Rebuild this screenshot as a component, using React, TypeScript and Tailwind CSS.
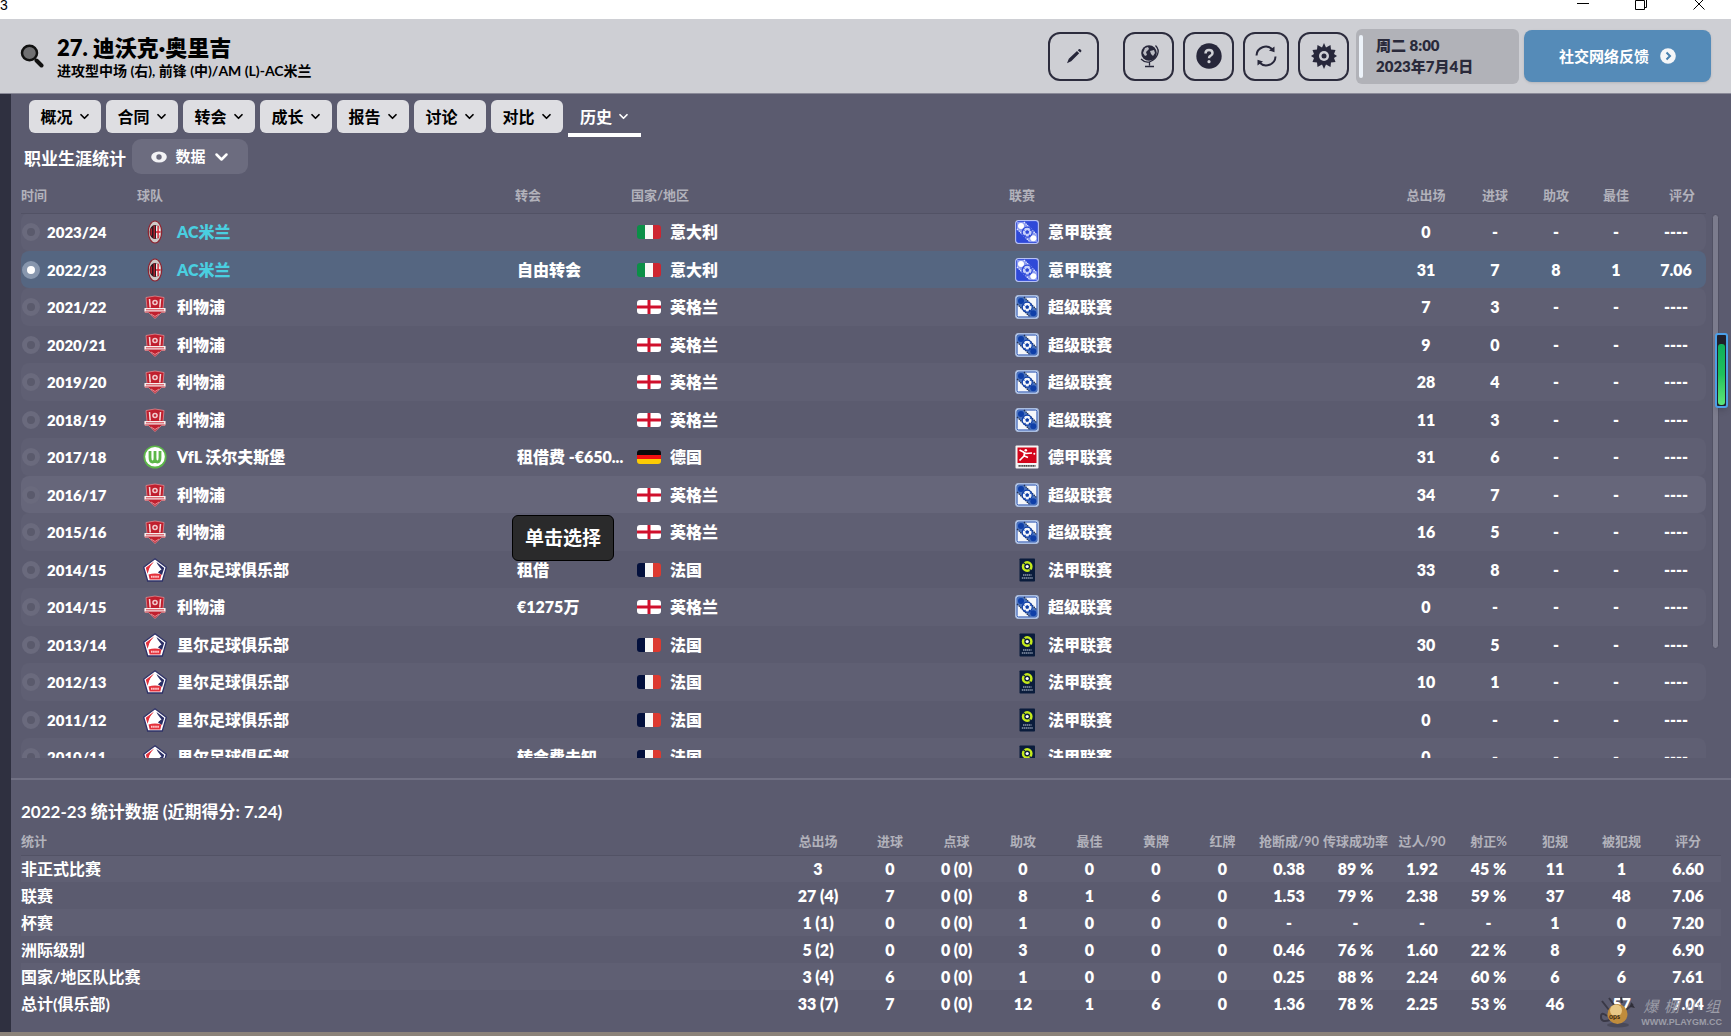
import { useState } from 'react';
import type { ReactNode } from 'react';

type Club = 'milan' | 'liverpool' | 'wolfsburg' | 'lille';

type Season = {
  year: string;
  club: Club;
  fee?: string;
  stats: string[];
};

const clubs: Record<Club, { name: string; country: string; league: string }> = {
  milan: { name: 'AC米兰', country: '意大利', league: '意甲联赛' },
  liverpool: { name: '利物浦', country: '英格兰', league: '超级联赛' },
  wolfsburg: { name: 'VfL 沃尔夫斯堡', country: '德国', league: '德甲联赛' },
  lille: { name: '里尔足球俱乐部', country: '法国', league: '法甲联赛' },
};

const seasons: Season[] = [
  { year: '2023/24', club: 'milan', stats: ['0', '-', '-', '-', '----'] },
  { year: '2022/23', club: 'milan', fee: '自由转会', stats: ['31', '7', '8', '1', '7.06'] },
  { year: '2021/22', club: 'liverpool', stats: ['7', '3', '-', '-', '----'] },
  { year: '2020/21', club: 'liverpool', stats: ['9', '0', '-', '-', '----'] },
  { year: '2019/20', club: 'liverpool', stats: ['28', '4', '-', '-', '----'] },
  { year: '2018/19', club: 'liverpool', stats: ['11', '3', '-', '-', '----'] },
  { year: '2017/18', club: 'wolfsburg', fee: '租借费 -€650...', stats: ['31', '6', '-', '-', '----'] },
  { year: '2016/17', club: 'liverpool', stats: ['34', '7', '-', '-', '----'] },
  { year: '2015/16', club: 'liverpool', stats: ['16', '5', '-', '-', '----'] },
  { year: '2014/15', club: 'lille', fee: '租借', stats: ['33', '8', '-', '-', '----'] },
  { year: '2014/15', club: 'liverpool', fee: '€1275万', stats: ['0', '-', '-', '-', '----'] },
  { year: '2013/14', club: 'lille', stats: ['30', '5', '-', '-', '----'] },
  { year: '2012/13', club: 'lille', stats: ['10', '1', '-', '-', '----'] },
  { year: '2011/12', club: 'lille', stats: ['0', '-', '-', '-', '----'] },
  { year: '2010/11', club: 'lille', fee: '转会费未知', stats: ['0', '-', '-', '-', '----'] },
];

const breakdownHeads = ['进球', '点球', '助攻', '最佳', '黄牌', '红牌', '抢断成/90', '传球成功率', '过人/90', '射正%', '犯规', '被犯规', '评分'];

const breakdown = [
  ['非正式比赛', '3', '0', '0 (0)', '0', '0', '0', '0', '0.38', '89 %', '1.92', '45 %', '11', '1', '6.60'],
  ['联赛', '27 (4)', '7', '0 (0)', '8', '1', '6', '0', '1.53', '79 %', '2.38', '59 %', '37', '48', '7.06'],
  ['杯赛', '1 (1)', '0', '0 (0)', '1', '0', '0', '0', '-', '-', '-', '-', '1', '0', '7.20'],
  ['洲际级别', '5 (2)', '0', '0 (0)', '3', '0', '0', '0', '0.46', '76 %', '1.60', '22 %', '8', '9', '6.90'],
  ['国家/地区队比赛', '3 (4)', '6', '0 (0)', '1', '0', '0', '0', '0.25', '88 %', '2.24', '60 %', '6', '6', '7.61'],
  ['总计(俱乐部)', '33 (7)', '7', '0 (0)', '12', '1', '6', '0', '1.36', '78 %', '2.25', '53 %', '46', '57', '7.04'],
];

const tabs = ['概况', '合同', '转会', '成长', '报告', '讨论', '对比'];

function Chevron({ className }: { className: string }) {
  return (
    <svg viewBox="0 0 12 8" className={className} fill="none" stroke="currentColor" strokeWidth="2" strokeLinecap="round" strokeLinejoin="round" aria-hidden="true">
      <path d="M2 2l4 4 4-4" />
    </svg>
  );
}

function ClubBadge({ club }: { club: Club }) {
  if (club === 'milan') {
    return (
      <svg viewBox="0 0 24 24" className="size-6">
        <ellipse cx="12" cy="12" rx="6.700" ry="11" fill="#cfcac8" stroke="#8e2430" strokeWidth="1.200" />
        <ellipse cx="12" cy="12" rx="5.400" ry="7" fill="#2a1a20" />
        <path d="M7.500 8.500H9v7H7.500zM10.500 5.500h1.500v13h-1.500z" fill="#b01f2c" />
        <path d="M13 5.300c3 1 4.600 3.500 4.600 6.700s-1.600 5.700-4.600 6.700z" fill="#efeaea" />
        <path d="M14.400 5.800h1.400v12.400h-1.400zM13 11.200h4.600v1.600H13z" fill="#d4202f" />
      </svg>
    );
  }
  if (club === 'liverpool') {
    return (
      <svg viewBox="0 0 24 24" className="size-6">
        <path d="M3 2.500Q12-.5 21 2.500l-1 11h2v4h-3.500L12 23.500 5.500 17.500H2v-4h2z" fill="#c01f2e" stroke="#dc8a90" strokeWidth=".8" />
        <path d="M6.500 4l.7 8.500M17.500 4l-.7 8.500" stroke="#f4dcdc" strokeWidth="1.500" />
        <circle cx="12" cy="7.500" r="2.800" fill="#f0c9cb" />
        <circle cx="12" cy="7.500" r="1.200" fill="#c01f2e" />
        <path d="M1.500 13h21v3.500h-21z" fill="#f7eeee" />
        <path d="M3 14.300h18v1H3z" fill="#cf3643" />
        <path d="M8 19l4 2.500 4-2.500" stroke="#e58c93" fill="none" />
      </svg>
    );
  }
  if (club === 'wolfsburg') {
    return (
      <svg viewBox="0 0 24 24" className="size-6">
        <circle cx="12" cy="12" r="11.500" fill="#5cb748" />
        <circle cx="12" cy="11.700" r="9.800" fill="#fff" />
        <path d="M7 6v6.500q0 4.500 2.600 4.500 2.400 0 2.400-4V6v7q0 4 2.400 4 2.600 0 2.600-4.500V6" fill="none" stroke="#5cb748" strokeWidth="2.800" />
      </svg>
    );
  }
  return (
    <svg viewBox="0 0 24 24" className="size-6">
      <path d="M12 .8L23.300 9.300 19.300 23H4.700L.7 9.300z" fill="#fff" stroke="#2f3268" strokeWidth="1.300" />
      <path d="M11 3.500L2.800 9.700l1.700 6L6.500 10z" fill="#e3313c" />
      <path d="M13.500 4l7.700 5.900-2.200 7.100-4-2.500 2-2.500z" fill="#2b2f66" />
      <path d="M6.500 16c-1-6 2-11 5.500-11l3 2 3.500 4.500-2.500 1.500-3-1 1 4z" fill="#fff" />
      <path d="M5.500 16.500q6.500-2 13 0l-1.200 5H6.700z" fill="#e3313c" />
      <path d="M8 18.700h8" stroke="#ffc9cb" strokeWidth="2" strokeDasharray="1.600 .5" />
    </svg>
  );
}

function Flag({ club }: { club: Club }) {
  if (club === 'liverpool') {
    return (
      <span className="flex h-[14px] w-6 shrink-0 overflow-hidden rounded-[3px] bg-white">
        <svg viewBox="0 0 24 14" className="h-full w-full">
          <path d="M12 0v14M0 7h24" stroke="#d0102c" strokeWidth="3" />
        </svg>
      </span>
    );
  }
  if (club === 'wolfsburg') {
    return (
      <span className="flex h-[14px] w-6 shrink-0 flex-col overflow-hidden rounded-[3px]">
        <span className="flex-1 bg-[#0a0a0a]" />
        <span className="flex-1 bg-[#f01010]" />
        <span className="flex-1 bg-[#fccb05]" />
      </span>
    );
  }
  const italy = club === 'milan';
  return (
    <span className="flex h-[14px] w-6 shrink-0 overflow-hidden rounded-[3px]">
      <span className={italy ? 'flex-1 bg-[#0b8f47]' : 'flex-1 bg-[#03103c]'} />
      <span className="flex-1 bg-[#f8f8f5]" />
      <span className={italy ? 'flex-1 bg-[#cd2530]' : 'flex-1 bg-[#dc3a30]'} />
    </span>
  );
}

function LeagueBadge({ club }: { club: Club }) {
  if (club === 'wolfsburg') {
    return (
      <svg viewBox="0 0 24 24" className="size-6">
        <rect x=".5" y=".5" width="23" height="23" rx="1" fill="#f4f4f4" />
        <rect x="2.500" y="2.500" width="19" height="15.500" fill="#d3051b" />
        <path d="M4.500 5l4 2M8 7l3 1.500 6-.5M9.500 8L9 11l-4.500 4.500M9.500 11l3.500 1.500" stroke="#fff" strokeWidth="1.700" fill="none" strokeLinejoin="round" />
        <circle cx="10.800" cy="5.200" r="1.300" fill="#fff" />
        <circle cx="19.300" cy="8.800" r="1" fill="#fff" />
        <path d="M3.500 20.800h17" stroke="#444" strokeWidth="1.700" strokeDasharray="1.400 .4" />
      </svg>
    );
  }
  if (club === 'lille') {
    return (
      <svg viewBox="0 0 24 24" className="size-6">
        <rect x="4.500" y=".5" width="15.500" height="23" rx=".8" fill="#0a1c3c" />
        <circle cx="12.200" cy="8.500" r="4.200" fill="none" stroke="#c5ea1c" strokeWidth="2.500" />
        <circle cx="12.200" cy="8.500" r="1.600" fill="#fff" />
        <path d="M8 4.500l2 1.500M14.500 11.500l2 1.500" stroke="#0a1c3c" strokeWidth="1.200" />
        <path d="M8 17h8.500M6.800 20h11" stroke="#8b96aa" strokeWidth="1.400" strokeDasharray="1.400 .5" />
      </svg>
    );
  }
  const serieA = club === 'milan';
  const ink = serieA ? '#2f49d8' : '#0f3fa8';
  const light = serieA ? '#c9d2fb' : '#f5f7fb';
  return (
    <svg viewBox="0 0 24 24" className="size-6">
      <rect x=".7" y=".7" width="22.600" height="22.600" rx="2.500" fill={serieA ? ink : light} stroke={serieA ? '#b5c0f5' : '#a9bde0'} strokeWidth="1.300" />
      <rect x="2" y="2" width="20" height="20" rx="1.500" fill="none" stroke={ink} strokeWidth="1" />
      <path d="M2 2h7l13 13v7h-7L2 9z" fill={serieA ? '#8b9bf0' : '#4a72bd'} />
      <path d="M9 2l13 13M2 9l13 13" stroke={serieA ? '#e2e7ff' : '#26344f'} strokeWidth="1.200" strokeDasharray="1.500 .8" />
      <circle cx="6" cy="6" r="3" fill={serieA ? '#fff' : ink} />
      <circle cx="18.300" cy="18.300" r="3" fill={serieA ? '#fff' : ink} />
      <circle cx="12.200" cy="12.200" r="5" fill={light} stroke={ink} strokeWidth="1.200" />
      <path d="M12.200 10l2 1.500-.8 2.300H11l-.8-2.300z" fill={ink} />
      <path d="M8 9.500l1.500 1M16.400 9.500l-1.500 1M9.500 16l1-1M15 16l-1-1" stroke={ink} strokeWidth="1.300" />
    </svg>
  );
}

function ToolButton({ label, children, className = 'w-[51px]' }: { label: string; children: ReactNode; className?: string }) {
  return (
    <button type="button" aria-label={label} className={`flex h-[49px] items-center justify-center rounded-[12px] border-2 border-[#2c2c3d] text-[#27273a] ${className}`}>
      {children}
    </button>
  );
}

function WindowBar() {
  return (
    <div className="flex h-[19px] shrink-0 justify-between overflow-hidden bg-white text-black">
      <span className="font-['Liberation_Sans'] text-[14px] leading-[10px]">3</span>
      <div className="flex gap-[46px] pr-[26px]">
        <button type="button" aria-label="最小化" className="h-3 w-3">
          <svg viewBox="0 0 12 12" className="size-3" stroke="currentColor"><path d="M0 3.500h12" /></svg>
        </button>
        <button type="button" aria-label="还原" className="h-3 w-3">
          <svg viewBox="0 0 12 12" className="size-3" fill="none" stroke="currentColor"><path d="M.5.500h9v9h-9zM11.500 0v7.500h-2" /></svg>
        </button>
        <button type="button" aria-label="关闭" className="h-3 w-3">
          <svg viewBox="0 0 12 12" className="size-3" stroke="currentColor"><path d="M.5-1.500l11 11M11.500-1.500l-11 11" /></svg>
        </button>
      </div>
    </div>
  );
}

function Header() {
  return (
    <header className="flex h-[75px] shrink-0 items-center border-b border-[#8a8a98] bg-[#cecfd4] pr-5 pl-5">
      <button type="button" aria-label="搜索" className="mr-[13px]">
        <svg viewBox="0 0 24 24" className="size-6">
          <ellipse cx="9.500" cy="9" rx="7.500" ry="7.300" fill="#707072" stroke="#111" strokeWidth="2.500" />
          <path d="M16.500 16.500l5 5" stroke="#111" strokeWidth="4" strokeLinecap="round" />
        </svg>
      </button>
      <div className="flex-1 pt-1 text-black">
        <h1 className="text-[22px] leading-[26px] font-extrabold">27. 迪沃克·奥里吉</h1>
        <p className="text-[14px] leading-[20px] font-bold">进攻型中场 (右), 前锋 (中)/AM (L)-AC米兰</p>
      </div>
      <div className="flex items-center">
        <ToolButton label="编辑">
          <svg viewBox="0 0 18 18" className="size-[18px]" fill="currentColor">
            <path d="M12 4l2.200 2.200-8 8L2 16.200l1.800-4.400zM12.800 3.200l1-1q.7-.6 1.400 0l1 1q.6.700 0 1.400l-1 1z" />
          </svg>
        </ToolButton>
        <div className="ml-6 flex gap-[9px]">
          <ToolButton label="世界">
            <svg viewBox="0 0 24 26" className="h-[26px] w-6">
              <circle cx="12" cy="10" r="7.800" fill="currentColor" />
              <path d="M8 5l3-1 1 2-3 3 1 3-2 1-2-3zM13 8l4-1 1 3-2 3-2-2z" fill="#b9bac2" />
              <path d="M18.500 2.500q4 4 2 9t-7 7-9.500-2.500M12.500 19v3.500M8 23.500h9" fill="none" stroke="currentColor" strokeWidth="1.300" />
            </svg>
          </ToolButton>
          <ToolButton label="帮助">
            <svg viewBox="0 0 26 26" className="size-[26px]">
              <circle cx="13" cy="13" r="12.700" fill="currentColor" />
              <path d="M9.500 10.500q0-3.500 3.500-3.500t3.500 3q0 1.800-1.800 2.700-1.700.8-1.700 2.600" fill="none" stroke="#cecfd4" strokeWidth="2.500" />
              <circle cx="13" cy="18.700" r="1.600" fill="#cecfd4" />
            </svg>
          </ToolButton>
          <ToolButton label="刷新" className="w-[46px]">
            <svg viewBox="0 0 22 22" className="size-[22px]" fill="none" stroke="currentColor" strokeWidth="2">
              <path d="M1.500 10.500A9.300 9.300 0 0 1 17.500 4.500M20.500 11.500A9.300 9.300 0 0 1 4.500 17.500" />
              <path d="M14 5.500l5.500 1.800V1.500zM8 16.500l-5.500-1.800v5.800z" fill="currentColor" stroke="none" />
            </svg>
          </ToolButton>
          <ToolButton label="设置">
            <svg viewBox="0 0 26 26" className="size-[26px]" fill="currentColor">
              <path d="M13 0l2 4.500L19.500 2 20 6.500 24.500 7l-1.500 4L26 13l-3 2 1.500 4-4.500.5-.5 4.500-4.500-2.500L13 26l-2-4.500L6.500 24 6 19.500 1.500 19 3 15l-3-2 3-2-1.500-4L6 6.500 6.500 2 11 4.500z" />
              <circle cx="13" cy="13" r="5" fill="#cecfd4" />
              <circle cx="13" cy="13" r="2.500" />
            </svg>
          </ToolButton>
        </div>
        <div className="ml-[7px] flex h-[55px] w-[163px] items-center rounded-[6px] bg-[#b1b2b8] pl-[3px]">
          <span className="h-[43px] w-1 rounded-full bg-[#edf3fa]" />
          <p className="ml-[13px] text-[15px] leading-[21px] font-extrabold text-[#2a2a3b]">
            周二 8:00
            <br />
            2023年7月4日
          </p>
        </div>
        <button type="button" className="ml-[5px] flex h-[52px] w-[187px] items-center justify-center gap-[11px] rounded-[8px] bg-[#558bb8] text-[15px] font-bold text-white shadow">
          社交网络反馈
          <svg viewBox="0 0 16 16" className="size-4">
            <circle cx="8" cy="8" r="7.800" fill="#f4f6f8" />
            <path d="M6.500 4.500L10 8l-3.500 3.500" fill="none" stroke="#4680ae" strokeWidth="2" />
          </svg>
        </button>
      </div>
    </header>
  );
}

function Watermark() {
  return (
    <div className="absolute right-[9px] bottom-2 flex items-end gap-[5px] text-[#9c9da8]">
      <svg viewBox="0 0 36 32" className="h-8 w-9">
        <ellipse cx="18" cy="29" rx="11" ry="2.500" fill="#3e3d4b" opacity=".6" />
        <path d="M9 14L2 5M14 9L9 2M22 7L21 1M7 20q-6-5-6 1t9 3M26 14l7-6" stroke="#3a3947" strokeWidth="2" fill="none" />
        <path d="M31 6l4 6-5-1z" fill="#2f2e38" />
        <circle cx="17.500" cy="18" r="10" fill="#c08c3c" />
        <circle cx="16" cy="14.500" r="6" fill="#e8c886" />
        <text x="9" y="23" fontSize="7" fontWeight="bold" fill="#3c2c14">ops</text>
      </svg>
      <div>
        <div className="flex justify-between px-[2px] font-['Liberation_Serif','Noto_Sans_CJK_SC',serif] text-[15px] leading-[18px] italic">
          <span>爆</span><span>棚</span><span>小</span><span>组</span>
        </div>
        <div className="font-['Liberation_Sans'] text-[9px] leading-[12px] font-bold whitespace-nowrap">WWW.PLAYGM.CC</div>
      </div>
    </div>
  );
}

export default function App() {
  const [selected, setSelected] = useState(1);

  return (
    <div className="relative flex h-screen flex-col overflow-hidden bg-[#8b8279] font-['Lato','Noto_Sans_CJK_SC',sans-serif] text-white">
      <WindowBar />
      <Header />

      <div className="flex min-h-0 flex-1 bg-[#2f3040] pl-[11px]">
        <main className="flex min-w-0 flex-1 flex-col bg-[#5b5b6f]">
          <nav className="flex h-[45px] shrink-0 gap-[5px] pt-[6px] pl-[18px]">
            {tabs.map((tab) => (
              <button key={tab} type="button" className="flex h-[33px] w-[72px] items-center justify-center gap-[6px] rounded-[6px] bg-[#dedee2] text-[16px] font-bold text-black">
                {tab}
                <Chevron className="h-[7px] w-[11px]" />
              </button>
            ))}
            <button type="button" className="flex h-[37px] w-[73px] items-center justify-center gap-[6px] border-b-4 border-white text-[16px] font-bold">
              历史
              <Chevron className="h-[7px] w-[11px]" />
            </button>
          </nav>

          <section className="flex min-h-0 flex-1 flex-col border-b-2 border-[#717184] pb-5">
            <div className="flex h-[35px] shrink-0 items-end gap-[6px] pl-[13px]">
              <h2 className="text-[17px] leading-[30px] font-bold">职业生涯统计</h2>
              <button type="button" className="flex h-[35px] w-[116px] items-center justify-center gap-[8px] rounded-[9px] bg-[#6c6c7f] text-[15px] font-bold">
                <svg viewBox="0 0 16 12" className="h-3 w-4">
                  <ellipse cx="8" cy="6" rx="7.800" ry="5.500" fill="#f3f3f6" />
                  <circle cx="8" cy="6" r="2.700" fill="#6c6c7f" />
                </svg>
                数据
                <Chevron className="h-[10px] w-[15px]" />
              </button>
            </div>

            <div className="flex min-h-0 flex-1 overflow-hidden pr-[12px] pl-[10px]">
              <div className="min-w-0 flex-1">
                <table className="w-full table-fixed text-[16px] leading-[24px] font-extrabold">
                  <thead className="text-left text-[13px] text-[#b2b2bb]">
                    <tr className="h-[39px] border-b border-[#525265]">
                      <th className="w-[116px] pt-1">时间</th>
                      <th className="w-[378px] pt-1">球队</th>
                      <th className="w-[116px] pt-1">转会</th>
                      <th className="w-[378px] pt-1">国家/地区</th>
                      <th className="pt-1">联赛</th>
                      <th className="w-[76px] pt-1 text-center">总出场</th>
                      <th className="w-[62px] pt-1 text-center">进球</th>
                      <th className="w-[60px] pt-1 text-center">助攻</th>
                      <th className="w-[60px] pt-1 text-center">最佳</th>
                      <th className="w-[60px] pt-1 pl-3 text-center">评分</th>
                    </tr>
                  </thead>
                  <tbody>
                    {seasons.map((season, i) => {
                      const club = clubs[season.club];
                      const tone = i === selected ? 'bg-[#556681]' : i === 7 ? 'bg-[#66667a]' : i % 2 === 0 ? 'bg-[#5f5f73]' : '';
                      return (
                        <tr key={i} className="odd:h-[38px] even:h-[37px]">
                          <td className={`rounded-l-[8px] pl-px ${tone}`}>
                            <label className="flex items-center gap-[7px] text-[15px]">
                              <input
                                type="radio"
                                name="season"
                                checked={i === selected}
                                onChange={() => setSelected(i)}
                                className="size-[18px] appearance-none rounded-full border-[5px] border-[#6a6a7d] bg-[#5a5a6c] checked:border-[#8796ad] checked:bg-white"
                              />
                              {season.year}
                            </label>
                          </td>
                          <td className={tone}>
                            <a href="#club" className={`flex items-center gap-[10px] pl-[6px] ${season.club === 'milan' ? 'text-[#4acfe0]' : ''}`}>
                              <ClubBadge club={season.club} />
                              {club.name}
                            </a>
                          </td>
                          <td className={`pl-[2px] whitespace-nowrap ${tone}`}>{season.fee}</td>
                          <td className={tone}>
                            <div className="flex items-center gap-[9px] pl-[6px]">
                              <Flag club={season.club} />
                              {club.country}
                            </div>
                          </td>
                          <td className={tone}>
                            <div className="flex items-center gap-[9px] pl-[6px]">
                              <LeagueBadge club={season.club} />
                              {club.league}
                            </div>
                          </td>
                          {season.stats.map((value, n) => (
                            <td key={n} className={`text-center last:rounded-r-[8px] ${tone}`}>{value}</td>
                          ))}
                        </tr>
                      );
                    })}
                  </tbody>
                </table>
              </div>
              <div className="ml-[6px] pt-[40px]">
                <div className="h-4/5 w-[7px] rounded-full border border-[#525264] bg-[#7c7c8d]" />
              </div>
            </div>
          </section>

          <section className="shrink-0 px-[10px] pt-5 pb-[15px]">
            <h2 className="text-[17px] leading-[24px] font-bold">2022-23 统计数据 (近期得分: 7.24)</h2>
            <table className="w-full table-fixed text-[16px] leading-[24px] font-extrabold">
              <thead className="text-[13px] whitespace-nowrap text-[#b2b2bb]">
                <tr className="h-[31px] border-b border-[#525265]">
                  <th className="pt-1 text-left">统计</th>
                  <th className="w-[78px] pt-1">总出场</th>
                  {breakdownHeads.map((head) => (
                    <th key={head} className="pt-1 odd:w-[66px] even:w-[67px]">{head}</th>
                  ))}
                </tr>
              </thead>
              <tbody>
                {breakdown.map(([name, ...values]) => (
                  <tr key={name} className="h-[27px] text-center odd:bg-[#5f5f73]">
                    <th scope="row" className="text-left">{name}</th>
                    {values.map((value, n) => (
                      <td key={n}>{value}</td>
                    ))}
                  </tr>
                ))}
              </tbody>
            </table>
          </section>
        </main>
      </div>
      <div className="h-1 shrink-0" />

      <div role="tooltip" className="absolute top-[515px] left-[512px] rounded-[6px] border border-black bg-[#2a2a2b] px-3 py-[9px] text-[19px] leading-[26px] font-bold">
        单击选择
      </div>
      <div className="absolute top-[333px] right-[3px] h-[75px] w-[13px] rounded-[3px] border-2 border-[#4c9fe8] bg-[#20202c] p-px shadow-md">
        <div className="mt-2 h-[61px] rounded-[3px] bg-linear-to-b from-[#0fae5a] via-[#1fc25c] to-[#5ce679]" />
      </div>
      <Watermark />
    </div>
  );
}
